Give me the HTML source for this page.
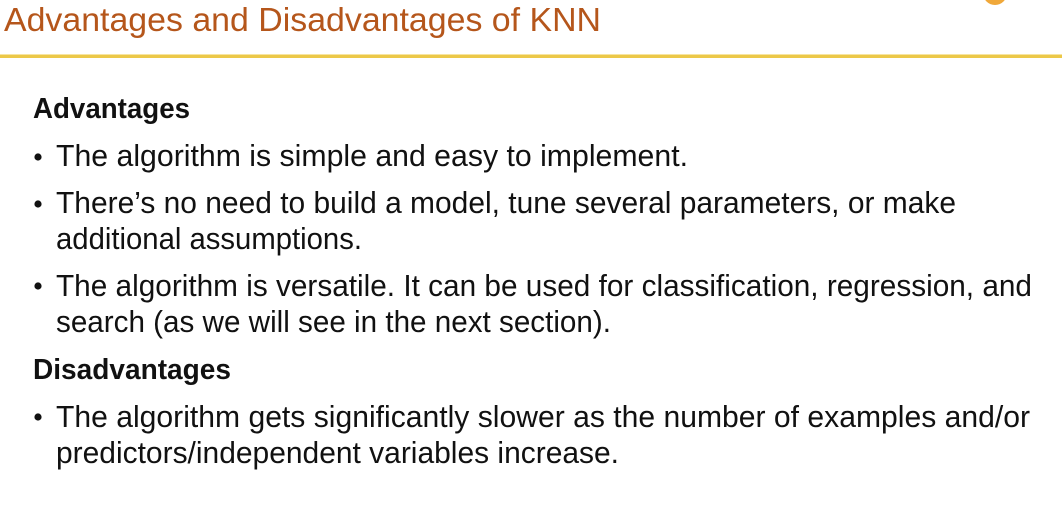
<!DOCTYPE html>
<html><head><meta charset="utf-8"><style>
html,body{margin:0;padding:0;background:#fff;width:1062px;height:530px;overflow:hidden}
svg{display:block}
text{font-family:"Liberation Sans",sans-serif;fill:#111}
</style></head><body>
<svg width="1062" height="530" viewBox="0 0 1062 530" xmlns="http://www.w3.org/2000/svg">
<circle cx="995" cy="-7" r="12" fill="#f0a83a"/>
<text x="4" y="31" font-size="33" style="fill:#b5561b" textLength="597" lengthAdjust="spacingAndGlyphs">Advantages and Disadvantages of KNN</text>
<rect x="0" y="55" width="1062" height="3" fill="#ecc848"/>
<rect x="0" y="54" width="1062" height="1" fill="#f6e4a0"/>
<text x="33" y="118" font-size="29" font-weight="bold" textLength="157" lengthAdjust="spacingAndGlyphs">Advantages</text>
<circle cx="38" cy="157" r="3.6" fill="#111"/>
<text x="56" y="166" font-size="31" textLength="632" lengthAdjust="spacingAndGlyphs">The algorithm is simple and easy to implement.</text>
<circle cx="38" cy="204" r="3.6" fill="#111"/>
<text x="56" y="213" font-size="31" textLength="900" lengthAdjust="spacingAndGlyphs">There’s no need to build a model, tune several parameters, or make</text>
<text x="56" y="249" font-size="31" textLength="306" lengthAdjust="spacingAndGlyphs">additional assumptions.</text>
<circle cx="38" cy="286" r="3.6" fill="#111"/>
<text x="56" y="296" font-size="31" textLength="976" lengthAdjust="spacingAndGlyphs">The algorithm is versatile. It can be used for classification, regression, and</text>
<text x="56" y="332" font-size="31" textLength="555" lengthAdjust="spacingAndGlyphs">search (as we will see in the next section).</text>
<text x="33" y="379" font-size="29" font-weight="bold" textLength="198" lengthAdjust="spacingAndGlyphs">Disadvantages</text>
<circle cx="38" cy="417" r="3.6" fill="#111"/>
<text x="56" y="427" font-size="31" textLength="974" lengthAdjust="spacingAndGlyphs">The algorithm gets significantly slower as the number of examples and/or</text>
<text x="56" y="463" font-size="31" textLength="563" lengthAdjust="spacingAndGlyphs">predictors/independent variables increase.</text>
</svg>
</body></html>
